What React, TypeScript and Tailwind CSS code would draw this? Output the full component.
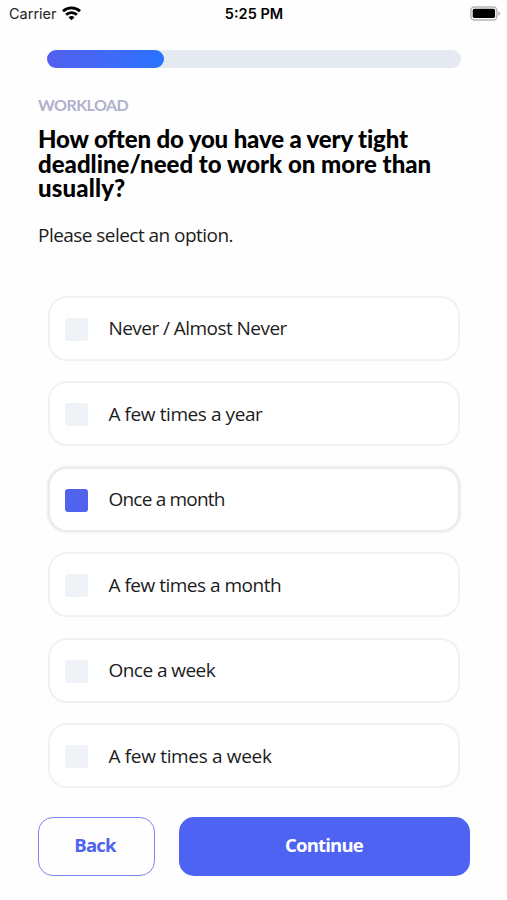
import React, { useState } from 'react';

const OPTIONS = [
  { label: 'Never / Almost Never', tracking: 'tracking-[-0.55px]' },
  { label: 'A few times a year', tracking: 'tracking-[-0.42px]' },
  { label: 'Once a month', tracking: 'tracking-[-0.8px]' },
  { label: 'A few times a month', tracking: 'tracking-[-0.5px]' },
  { label: 'Once a week', tracking: 'tracking-[-0.55px]' },
  { label: 'A few times a week', tracking: 'tracking-[-0.33px]' }
];

function StatusBar() {
  return (
    <div className="grid grid-cols-3 items-center h-7 pl-[9px] pr-[6px] text-[#222] font-['Inter',sans-serif]">
      <div className="flex items-center gap-[5px]">
        <span className="text-[14.5px]">Carrier</span>
        <svg className="-mt-[2px]" width="19" height="15" viewBox="0 0 19 15" fill="none" stroke="#000" strokeWidth="2.8">
          <path d="M1 5.3C5.7 0.8 13.3 0.8 18 5.3" />
          <path d="M4.1 8.8C7.1 5.9 11.9 5.9 14.9 8.8" />
          <path d="M9.5 14.2L6.5 11.2C8.2 9.6 10.8 9.6 12.5 11.2Z" fill="#000" stroke="none" />
        </svg>
      </div>
      <span className="-ml-[2px] text-center font-semibold text-black text-[14.5px]">5:25 PM</span>
      <svg className="justify-self-end -mt-[2px]" width="31" height="15" viewBox="0 0 31 15">
        <rect x="0.9" y="0.9" width="26" height="13" rx="3.6" fill="#fff" stroke="#b5b5b5" strokeWidth="1.5" />
        <rect x="2.7" y="2.7" width="22.4" height="9.4" rx="1.8" fill="#000" />
        <path d="M28.3 5.2C30.8 6 30.8 9 28.3 9.8Z" fill="#b5b5b5" />
      </svg>
    </div>
  );
}

interface OptionRowProps {
  label: string;
  tracking: string;
  selected: boolean;
  onSelect: () => void;
}

function OptionRow({ label, tracking, selected, onSelect }: OptionRowProps) {
  return (
    <button
      type="button"
      onClick={onSelect}
      className={`flex items-center h-[65px] w-full pl-[15px] rounded-[19px] border-2 bg-white text-left ${
        selected ? 'border-[#ebebeb] shadow-[0_0_3px_rgba(0,0,0,0.15)]' : 'border-[#f1f1f1]'
      }`}
    >
      <span className={`mt-[2px] size-[23px] rounded-[3px] ${selected ? 'bg-[#4f63ee]' : 'bg-[#eff2f7]'}`} />
      <span className={`ml-[20.5px] text-[19px] leading-6 text-[#1c1c1c] whitespace-nowrap ${tracking}`}>{label}</span>
    </button>
  );
}

export default function App() {
  const [selected, setSelected] = useState(2);

  return (
    <div className="w-[507px] h-[900px] overflow-hidden bg-[#fefefe] font-['Open_Sans',sans-serif]">
      <StatusBar />

      {/* Progress */}
      <div className="mt-[22px] ml-[47px] w-[414px] h-[18px] rounded-full bg-[#e4eaf0]">
        <div className="h-full w-[117px] rounded-full bg-linear-to-r from-[#5260f0] to-[#2673ff]" />
      </div>

      {/* Question */}
      <div className="px-[38px] pt-[27px]">
        <p className="text-[16px] leading-5 font-bold tracking-[-0.55px] text-[#b0b1cd] font-['Lato',sans-serif]">WORKLOAD</p>
        <h1 className="mt-[12px] text-[24px] leading-[24.5px] font-black text-black whitespace-nowrap font-['Lato',sans-serif]">
          <span className="tracking-[-0.14px]">How often do you have a very tight</span>
          <br />
          <span className="tracking-[0.01px]">deadline/need to work on more than</span>
          <br />
          <span className="tracking-[0.15px]">usually?</span>
        </h1>
        <p className="mt-[22px] text-[19px] leading-6 text-[#1c1c1c] tracking-[-0.54px]">Please select an option.</p>
      </div>

      {/* Options */}
      <div className="mt-[49px] ml-[48px] w-[412px] flex flex-col gap-[20.6px]">
        {OPTIONS.map((option, index) => (
          <OptionRow
            key={option.label}
            label={option.label}
            tracking={option.tracking}
            selected={index === selected}
            onSelect={() => setSelected(index)}
          />
        ))}
      </div>

      {/* Actions */}
      <div className="mt-[28.5px] pl-[37.5px] flex gap-[24px] text-[18.5px] font-bold tracking-[-0.8px]">
        <button type="button" className="w-[117px] h-[59px] pb-[3px] pr-[2px] rounded-[15px] border-[1.5px] border-[#7a86f2] text-[#4f63ee]">
          Back
        </button>
        <button type="button" className="w-[291px] h-[59px] pb-[3px] rounded-[15px] bg-[#4f63f2] text-white">
          Continue
        </button>
      </div>
    </div>
  );
}
